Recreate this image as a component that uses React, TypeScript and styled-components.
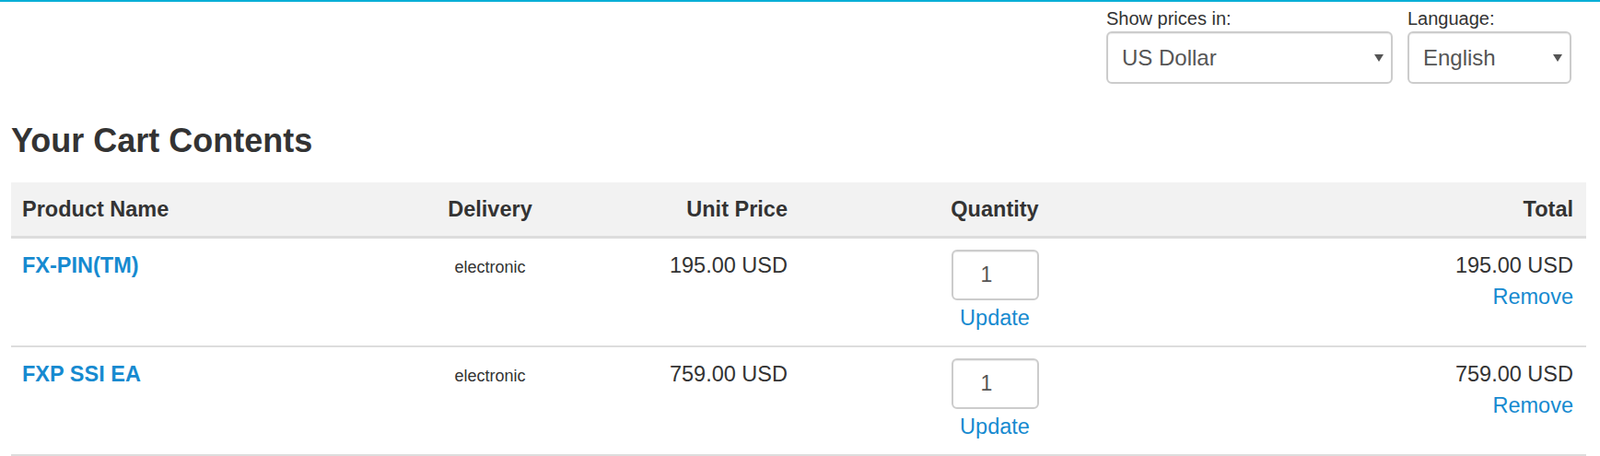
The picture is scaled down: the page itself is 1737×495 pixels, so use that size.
import React from 'react';
import styled, { createGlobalStyle } from 'styled-components';

const GlobalStyle = createGlobalStyle`
  body {
    margin: 0;
    background: #fff;
    color: #333;
    font-family: "Liberation Sans", Arial, Helvetica, sans-serif;
  }
`;

const Page = styled.div`
  border-top: 2px solid #0aafd7;
`;

const TopBar = styled.div`
  display: flex;
  justify-content: flex-end;
  gap: 16px;
  padding: 4px 31px 0 12px;
`;

const Field = styled.div`
  display: flex;
  flex-direction: column;
`;

const Label = styled.label`
  font-size: 20px;
  line-height: 28px;
  color: #333;
`;

const SelectWrap = styled.div<{ $width: number }>`
  position: relative;
  width: ${(p) => p.$width}px;
`;

const Select = styled.select`
  appearance: none;
  -webkit-appearance: none;
  display: block;
  width: 100%;
  height: 57px;
  box-sizing: border-box;
  padding: 0 40px 0 15px;
  border: 2px solid #ccc;
  border-radius: 6px;
  background: #fff;
  box-shadow: inset 0 1px 1px rgba(0, 0, 0, 0.075);
  color: #555;
  font-family: inherit;
  font-size: 24px;
`;

const Caret = styled.span`
  position: absolute;
  right: 10px;
  top: 50%;
  margin-top: -4px;
  width: 0;
  height: 0;
  border-left: 5px solid transparent;
  border-right: 5px solid transparent;
  border-top: 8px solid #555;
  pointer-events: none;
`;

const Content = styled.div`
  padding: 0 15px 0 12px;
`;

const Title = styled.h2`
  margin: 42px 0 25px;
  font-size: 36px;
  line-height: 1.1;
  font-weight: bold;
  color: #333;
`;

const CartTable = styled.table`
  width: 100%;
  table-layout: fixed;
  border-collapse: separate;
  border-spacing: 0;
`;

type Align = 'left' | 'center' | 'right';

const Th = styled.th<{ $align: Align }>`
  background: #f2f2f2;
  padding: 12px 14px 12px 12px;
  border-bottom: 3px solid #ddd;
  font-size: 23.5px;
  line-height: 34px;
  font-weight: bold;
  color: #333;
  text-align: ${(p) => p.$align};
`;

const Td = styled.td<{ $align: Align }>`
  padding: 12px 14px 13px 12px;
  border-bottom: 2px solid #ddd;
  vertical-align: top;
  font-size: 23.5px;
  line-height: 34px;
  color: #333;
  text-align: ${(p) => p.$align};
`;

const ProductLink = styled.a`
  color: #168ad0;
  font-weight: bold;
  text-decoration: none;
`;

const Delivery = styled.small`
  font-size: 18px;
`;

const QtyInput = styled.input`
  display: block;
  width: 95px;
  height: 55px;
  margin: 0 auto;
  box-sizing: border-box;
  padding: 0 0 0 30px;
  border: 2px solid #ccc;
  border-radius: 6px;
  box-shadow: inset 0 1px 1px rgba(0, 0, 0, 0.075);
  color: #555;
  font-family: inherit;
  font-size: 23px;
`;

const ActionLink = styled.a<{ $gap?: number }>`
  display: block;
  margin-top: ${(p) => p.$gap ?? 0}px;
  color: #168ad0;
  text-decoration: none;
`;

const columns: { label: string; align: Align; width: number }[] = [
  { label: 'Product Name', align: 'left', width: 420 },
  { label: 'Delivery', align: 'center', width: 202 },
  { label: 'Unit Price', align: 'right', width: 235 },
  { label: 'Quantity', align: 'center', width: 424 },
  { label: 'Total', align: 'right', width: 429 },
];

const items = [
  { id: 1, name: 'FX-PIN(TM)', delivery: 'electronic', price: '195.00 USD', qty: 1, total: '195.00 USD' },
  { id: 2, name: 'FXP SSI EA', delivery: 'electronic', price: '759.00 USD', qty: 1, total: '759.00 USD' },
];

const App: React.FC = () => {
  return (
    <Page>
      <GlobalStyle />
      <TopBar>
        <Field>
          <Label>Show prices in:</Label>
          <SelectWrap $width={311}>
            <Select defaultValue="usd">
              <option value="usd">US Dollar</option>
              <option value="eur">Euro</option>
            </Select>
            <Caret />
          </SelectWrap>
        </Field>
        <Field>
          <Label>Language:</Label>
          <SelectWrap $width={178}>
            <Select defaultValue="en">
              <option value="en">English</option>
              <option value="de">Deutsch</option>
            </Select>
            <Caret />
          </SelectWrap>
        </Field>
      </TopBar>

      <Content>
        <Title>Your Cart Contents</Title>
        <CartTable>
          <colgroup>
            {columns.map((c) => (
              <col key={c.label} style={{ width: c.width }} />
            ))}
          </colgroup>
          <thead>
            <tr>
              {columns.map((c) => (
                <Th key={c.label} $align={c.align}>{c.label}</Th>
              ))}
            </tr>
          </thead>
          <tbody>
            {items.map((item) => (
              <tr key={item.id}>
                <Td $align="left">
                  <ProductLink href="#">{item.name}</ProductLink>
                </Td>
                <Td $align="center">
                  <Delivery>{item.delivery}</Delivery>
                </Td>
                <Td $align="right">{item.price}</Td>
                <Td $align="center">
                  <QtyInput type="text" defaultValue={item.qty} />
                  <ActionLink href="#" $gap={2}>Update</ActionLink>
                </Td>
                <Td $align="right">
                  {item.total}
                  <ActionLink href="#">Remove</ActionLink>
                </Td>
              </tr>
            ))}
          </tbody>
        </CartTable>
      </Content>
    </Page>
  );
};

export default App;
